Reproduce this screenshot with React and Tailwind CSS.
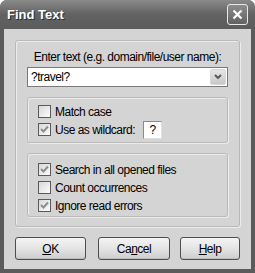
import React from "react";

function Check({ checked }) {
  return (
    <div className="w-[13px] h-[13px] border border-[#5a5a5a] bg-gradient-to-br from-[#d8d8d8] to-[#fcfcfc] flex items-center justify-center shrink-0">
      {checked && (
        <svg width="9" height="9" viewBox="0 0 9 9">
          <path d="M1 4 L3.5 6.5 L8 1.5" stroke="#8e8e8e" strokeWidth="2" fill="none" />
        </svg>
      )}
    </div>
  );
}

function Row({ checked, children }) {
  return (
    <div className="flex items-center h-[13px] gap-[4px]">
      <Check checked={checked} />
      <span>{children}</span>
    </div>
  );
}

function Btn({ w, children }) {
  return (
    <div
      className={`h-[23px] ${w} rounded-[3px] border border-[#4e4e4e] bg-gradient-to-b from-[#f4f4f4] via-[#e4e4e4] to-[#cdcdcd] flex items-center justify-center shadow-[inset_0_-1px_0_#bdbdbd]`}
    >
      {children}
    </div>
  );
}

export default function App() {
  return (
    <div
      className="w-[255px] h-[273px] rounded-t-[7px] bg-[#5b5b5b] flex flex-col text-[12px] tracking-[-0.5px] text-black"
      style={{ fontFamily: '"Liberation Sans", Arial, sans-serif' }}
    >
      <div className="h-[29px] rounded-t-[7px] bg-gradient-to-b from-[#8a8a8a] via-[#626262] to-[#5c5c5c] flex items-center justify-between pl-[7px] pr-[7px]">
        <span className="text-white font-bold text-[13px] tracking-normal [text-shadow:1px_1px_0_#2a2a2a]">
          Find Text
        </span>
        <div className="w-[21px] h-[21px] rounded-[3px] border border-[#e8e8e8] bg-gradient-to-b from-[#8c8c8c] to-[#626262] flex items-center justify-center">
          <svg width="11" height="11" viewBox="0 0 11 11">
            <path d="M1.5 1.5 L9.5 9.5 M9.5 1.5 L1.5 9.5" stroke="white" strokeWidth="2.2" />
          </svg>
        </div>
      </div>
      <div className="mx-[4px] mb-[4px] flex-1 bg-[#d4d4d4] px-[11px] pt-[11px]">
        <div className="h-[187px] rounded-[3px] border border-[#b9b9b9] shadow-[inset_1px_1px_0_#ececec,1px_1px_0_#ececec] px-[11px] pt-[9px] flex flex-col">
          <div className="text-center leading-[14px]">
            Enter text (e.g. domain/file/user name):
          </div>
          <div className="mt-[3px] h-[20px] border border-[#7a7a7a] bg-white flex items-center justify-between pl-[3px] pr-[1px]">
            <span>?travel?</span>
            <div className="w-[16px] h-[16px] rounded-[2px] bg-gradient-to-b from-[#e6e6e6] to-[#c8c8c8] border border-[#d8d8d8] flex items-center justify-center">
              <svg width="8" height="6" viewBox="0 0 8 6">
                <path d="M1 1 L4 4 L7 1" stroke="#555" strokeWidth="1.8" fill="none" />
              </svg>
            </div>
          </div>
          <div className="mt-[10px] h-[46px] rounded-[3px] border border-[#b9b9b9] shadow-[inset_1px_1px_0_#ececec,1px_1px_0_#ececec] pl-[10px] pt-[7px] flex flex-col gap-[5px]">
            <Row>Match case</Row>
            <div className="flex items-center h-[13px] gap-[4px]">
              <Check checked />
              <span>Use as wildcard:</span>
              <div className="ml-[4px] w-[19px] h-[18px] bg-white border border-t-[#8a8a8a] border-l-[#8a8a8a] border-r-[#e0e0e0] border-b-[#e0e0e0] flex items-center justify-center">
                ?
              </div>
            </div>
          </div>
          <div className="mt-[10px] h-[64px] rounded-[3px] border border-[#b9b9b9] shadow-[inset_1px_1px_0_#ececec,1px_1px_0_#ececec] pl-[10px] pt-[9px] flex flex-col gap-[5px]">
            <Row checked>Search in all opened files</Row>
            <Row>Count occurrences</Row>
            <Row checked>Ignore read errors</Row>
          </div>
        </div>
        <div className="mt-[10px] flex">
          <Btn w="w-[71px]">
            <span><u>O</u>K</span>
          </Btn>
          <div className="ml-[12px]">
            <Btn w="w-[72px]">
              <span>Ca<u>n</u>cel</span>
            </Btn>
          </div>
          <div className="ml-[10px]">
            <Btn w="w-[60px]">
              <span><u>H</u>elp</span>
            </Btn>
          </div>
        </div>
      </div>
    </div>
  );
}
